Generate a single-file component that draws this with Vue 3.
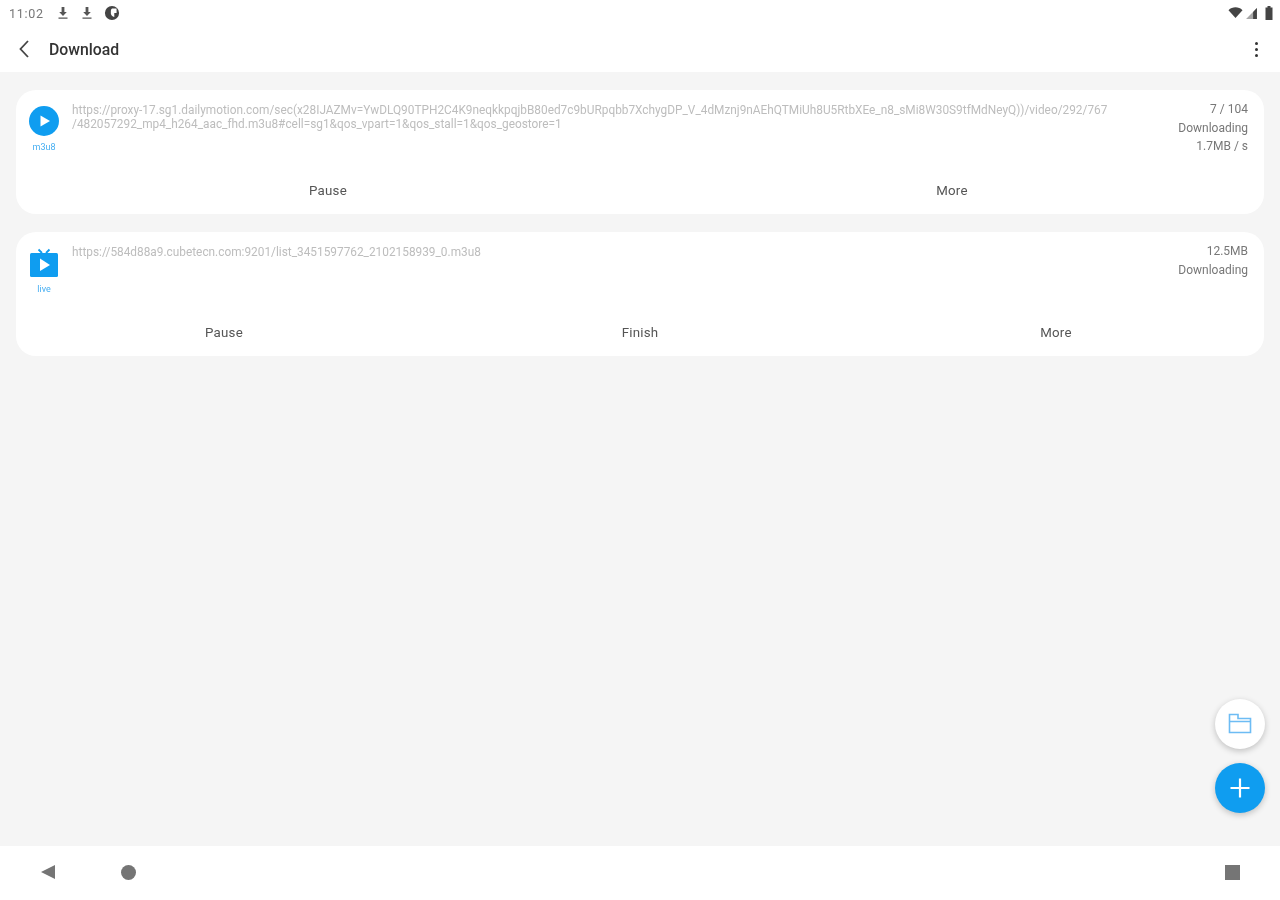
<script setup>
const tasks = [
  {
    id: 1,
    lines: [
      'https://proxy-17.sg1.dailymotion.com/sec(x28IJAZMv=YwDLQ90TPH2C4K9neqkkpqjbB80ed7c9bURpqbb7XchygDP_V_4dMznj9nAEhQTMiUh8U5RtbXEe_n8_sMi8W30S9tfMdNeyQ))/video/292/767',
      '/482057292_mp4_h264_aac_fhd.m3u8#cell=sg1&qos_vpart=1&qos_stall=1&qos_geostore=1'
    ],
    kind: 'm3u8',
    tv: false,
    info: ['7 / 104', 'Downloading', '1.7MB / s'],
    actions: ['Pause', 'More']
  },
  {
    id: 2,
    lines: ['https://584d88a9.cubetecn.com:9201/list_3451597762_2102158939_0.m3u8'],
    kind: 'live',
    tv: true,
    info: ['12.5MB', 'Downloading'],
    actions: ['Pause', 'Finish', 'More']
  }
]
</script>

<template>
  <div class="screen">
    <header class="status">
      <div class="status-left">
        <span class="time">11:02</span>
        <svg class="sico" viewBox="0 0 14 14"><path d="M5.600 1h2.800v5h2.400L7 10 3.200 6h2.400zM2.500 11.500h9v1.300h-9z" /></svg>
        <svg class="sico" viewBox="0 0 14 14"><path d="M5.600 1h2.800v5h2.400L7 10 3.200 6h2.400zM2.500 11.500h9v1.300h-9z" /></svg>
        <svg class="sico" viewBox="0 0 14 14"><path fill-rule="evenodd" d="M7 .8a6.200 6.200 0 1 0 0 12.400A6.200 6.200 0 0 0 7 .8zM7 3h4v4H9v3.500a3.500 3.500 0 0 1-3-3V5.500A2.500 2.500 0 0 1 7 3z" /></svg>
      </div>
      <div class="status-right">
        <svg class="wifi" viewBox="0 0 14 12"><path d="M0 3.200C3.800-.6 10.200-.6 14 3.200L7 11z" /></svg>
        <svg class="signal" viewBox="0 0 11 12"><path d="M10.500 1v10H.5z" fill="#a8a8a8" /><path d="M10.500 1v10H7V4.500z" fill="#444" /></svg>
        <svg class="battery" viewBox="0 0 8 14"><path d="M2.500 0h3v1.400H7.500V14H.5V1.400h2z" /></svg>
      </div>
    </header>

    <nav class="toolbar">
      <svg class="back" viewBox="0 0 12 20"><path d="M10 2 2.500 10l7.500 8" /></svg>
      <h1 class="title">Download</h1>
      <div class="menu"><i></i><i></i><i></i></div>
    </nav>

    <main class="content">
      <article v-for="t in tasks" :key="t.id" class="card">
        <div class="card-top">
          <div class="type">
            <svg v-if="!t.tv" class="type-icon" viewBox="0 0 30 30">
              <circle cx="15" cy="15" r="15" fill="#0f9df0" />
              <path d="M11.500 9.500 21 15l-9.500 5.500z" fill="#fff" />
            </svg>
            <svg v-else class="type-icon" viewBox="0 0 30 30">
              <path d="M9.500 1.500 13 5M20.500 1.500 17 5" stroke="#0f9df0" stroke-width="1.800" fill="none" />
              <rect x="1" y="5" width="28" height="24" rx="1.500" fill="#0f9df0" />
              <path d="M11 10.500 21 17l-10 6z" fill="#fff" />
            </svg>
            <span class="kind">{{ t.kind }}</span>
          </div>
          <p class="url"><span v-for="l in t.lines" :key="l">{{ l }}</span></p>
          <div class="info">
            <span v-for="line in t.info" :key="line">{{ line }}</span>
          </div>
        </div>
        <div class="actions">
          <button v-for="a in t.actions" :key="a" class="action">{{ a }}</button>
        </div>
      </article>

      <button class="fab fab-folder" aria-label="Folder">
        <svg viewBox="0 0 24 24"><path d="M1.500 20.500V2.500h8.500v4h12.500v14zM1.500 9.500h21" /></svg>
      </button>
      <button class="fab fab-add" aria-label="Add">
        <svg viewBox="0 0 24 24"><path d="M12 2.500v19M2.500 12h19" /></svg>
      </button>
    </main>

    <footer class="navbar">
      <div class="nav-left">
        <svg class="nav-back" viewBox="0 0 16 16"><path d="M15 1v14L1 8z" /></svg>
        <span class="nav-home"></span>
      </div>
      <span class="nav-recent"></span>
    </footer>
  </div>
</template>

<style scoped>
.screen {
  width: 1280px;
  height: 900px;
  display: flex;
  flex-direction: column;
  background: #f5f5f5;
  font-family: Roboto, "Liberation Sans", sans-serif;
  overflow: hidden;
  filter: blur(0.6px);
}
.status {
  height: 26px;
  flex: none;
  background: #fff;
  display: flex;
  align-items: center;
  justify-content: space-between;
  padding: 0 7px 0 9px;
}
.status-left { display: flex; align-items: center; }
.time { font-size: 12.500px; color: #777; letter-spacing: .7px; width: 47px; }
.sico { width: 14px; height: 14px; fill: #555; margin-right: 10px; }
.sico:last-child { width: 16px; height: 16px; margin-left: 0; fill: #444; }
.status-right { display: flex; align-items: center; gap: 2px; }
.wifi { width: 15px; height: 12px; fill: #444; }
.signal { width: 13px; height: 13px; }
.battery { width: 8px; height: 14px; fill: #444; margin-left: 5px; }
.toolbar {
  height: 46px;
  flex: none;
  background: #fff;
  display: flex;
  align-items: center;
  padding: 0 22px 0 18px;
}
.back { width: 12px; height: 20px; fill: none; stroke: #444; stroke-width: 1.800; }
.title { margin: 0 0 0 19px; font-size: 15.800px; font-weight: 500; color: #333; flex: 1; }
.menu { display: flex; flex-direction: column; gap: 3px; }
.menu i { width: 3px; height: 3px; background: #333; border-radius: 50%; display: block; }
.content {
  flex: 1;
  position: relative;
  padding: 18px 16px;
  display: flex;
  flex-direction: column;
  gap: 18px;
}
.card {
  height: 124px;
  background: #fff;
  border-radius: 20px;
  display: flex;
  flex-direction: column;
}
.card-top {
  height: 78px;
  flex: none;
  display: flex;
  padding: 10px 16px 0 14px;
  box-sizing: border-box;
}
.type {
  width: 28px;
  flex: none;
  margin-right: 14px;
  padding-top: 4px;
  display: flex;
  flex-direction: column;
  align-items: center;
}
.type-icon { width: 30px; height: 30px; flex: none; margin-top: 2px; }
.kind { margin-top: 6px; font-size: 9px; line-height: 10px; color: #45aef2; }
.url {
  margin: 3px 0 0;
  flex: 1;
  min-width: 0;
  font-size: 11.850px;
  line-height: 14px;
  color: #bdbdbd;
  white-space: nowrap;
}
.url span { display: block; }
.info {
  flex: none;
  width: 120px;
  margin-left: auto;
  display: flex;
  flex-direction: column;
  align-items: flex-end;
  font-size: 12px;
  line-height: 18.500px;
  color: #777;
}
.actions { flex: 1; display: flex; align-items: flex-start; }
.action {
  flex: 1;
  border: 0;
  background: none;
  padding: 0;
  height: 46px;
  margin-top: -1px;
  font: inherit;
  font-size: 13.300px;
  color: #555;
  letter-spacing: .2px;
}
.fab {
  position: absolute;
  right: 15px;
  width: 50px;
  height: 50px;
  border: 0;
  padding: 0;
  border-radius: 50%;
  display: flex;
  align-items: center;
  justify-content: center;
  box-shadow: 0 2px 6px rgba(0, 0, 0, .22);
}
.fab svg { width: 24px; height: 24px; fill: none; }
.fab-folder { bottom: 97px; background: #fff; }
.fab-folder svg { stroke: #6dbcf4; stroke-width: 1.600; }
.fab-add { bottom: 33px; background: #0f9df0; }
.fab-add svg { stroke: #fff; stroke-width: 2.200; }
.navbar {
  height: 54px;
  flex: none;
  box-sizing: border-box;
  background: #fff;
  display: flex;
  align-items: center;
  justify-content: space-between;
  padding: 0 40px 2px;
}
.nav-left { display: flex; align-items: center; gap: 65px; }
.nav-back { width: 16px; height: 16px; fill: #757575; }
.nav-home { width: 15px; height: 15px; border-radius: 50%; background: #757575; }
.nav-recent { width: 15px; height: 15px; background: #757575; }
</style>
